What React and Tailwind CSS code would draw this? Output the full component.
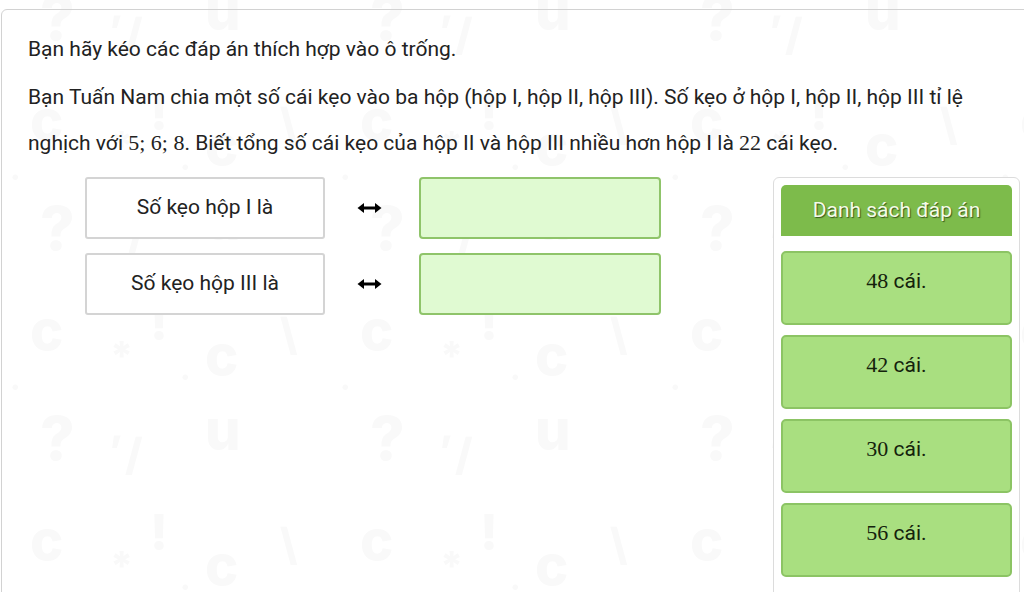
import React from "react";

const answers = ["48", "42", "30", "56"];
const pairs = ["Số kẹo hộp I là", "Số kẹo hộp III là"];

function Num({ children }) {
  return (
    <span className="text-[22px]" style={{ fontFamily: '"Liberation Serif", serif' }}>
      {children}
    </span>
  );
}

function Arrow() {
  return (
    <svg width="25" height="12" viewBox="0 0 25 12" className="text-black">
      <path d="M5 6 H20" stroke="currentColor" strokeWidth="3" />
      <path d="M0.5 6 L7 1 L7 11 Z" fill="currentColor" />
      <path d="M24.5 6 L18 1 L18 11 Z" fill="currentColor" />
    </svg>
  );
}

// nen mo voi cac ky tu ? c * !
function Pattern() {
  return (
    <svg className="absolute inset-0 h-full w-full" aria-hidden="true">
      <defs>
        <pattern id="sym" width="330" height="210" patternUnits="userSpaceOnUse" x="-10" y="60">
          <g fill="#f9f9f9" fontFamily="Inter, sans-serif" fontWeight="800">
            <text x="40" y="80" fontSize="56">c</text>
            <text x="120" y="100" fontSize="40">*</text>
            <text x="160" y="70" fontSize="50">!</text>
            <text x="215" y="105" fontSize="56">c</text>
            <text x="290" y="80" fontSize="44">\</text>
            <text x="50" y="190" fontSize="60">?</text>
            <text x="120" y="170" fontSize="40">,</text>
            <text x="215" y="180" fontSize="56">u</text>
            <text x="135" y="200" fontSize="44">/</text>
            <text x="20" y="120" fontSize="30">.</text>
            <text x="190" y="110" fontSize="30">.</text>
          </g>
        </pattern>
      </defs>
      <rect width="100%" height="100%" fill="url(#sym)" />
    </svg>
  );
}

export default function App() {
  return (
    <div
      className="relative h-[592px] w-[1024px] overflow-hidden bg-white text-[#222]"
      style={{ fontFamily: 'Roboto, "Liberation Sans", sans-serif' }}
    >
      <Pattern />
      <div className="relative ml-[1px] mt-[9px] h-[700px] w-[1040px] rounded-tl-md border border-[#d2d2d2] pl-[26px] pt-[17px]">
        <p className="text-[21px] leading-[45px]">Bạn hãy kéo các đáp án thích hợp vào ô trống.</p>
        <p className="mt-[3px] text-[21px] leading-[45px]">
          Bạn Tuấn Nam chia một số cái kẹo vào ba hộp (hộp I, hộp II, hộp III). Số kẹo ở hộp I, hộp II, hộp III tỉ lệ
          <br />
          nghịch với <Num>5; 6; 8</Num>. Biết tổng số cái kẹo của hộp II và hộp III nhiều hơn hộp I là <Num>22</Num> cái kẹo.
        </p>

        <div className="mt-[11px] flex items-start">
          <div className="flex w-[745px] flex-col gap-[14px] pl-[57px]">
            {pairs.map((label, i) => (
              <div key={i} className="flex items-center">
                <div className="flex h-[62px] w-[240px] items-center justify-center rounded-[3px] border-2 border-[#d4d4d4] bg-white text-[21px]">
                  {label}
                </div>
                <div className="flex w-[94px] justify-start pl-[32px]">
                  <Arrow />
                </div>
                <div className="h-[62px] w-[242px] rounded-[4px] border-2 border-[#8fc46a] bg-[#e0fad2]" />
              </div>
            ))}
          </div>

          <div className="h-[430px] w-[247px] rounded-md border border-[#dcdcdc] bg-white px-[7px] pt-[7px]">
            <div
              className="flex h-[51px] items-center justify-center rounded-t-[5px] bg-[#7dbb4b] text-[21px] text-[#f4fbe9]"
              style={{ textShadow: "1px 1px 1px #3a5a1c" }}
            >
              Danh sách đáp án
            </div>
            <div className="mt-[15px] flex flex-col gap-[10px]">
              {answers.map((n) => (
                <div
                  key={n}
                  className="h-[74px] rounded-[5px] border-2 border-[#8cc464] bg-[#a9df80] pt-[14px] text-center text-[21px] leading-[28px] text-[#14220c]"
                >
                  <Num>{n}</Num> cái.
                </div>
              ))}
            </div>
          </div>
        </div>
      </div>
    </div>
  );
}
